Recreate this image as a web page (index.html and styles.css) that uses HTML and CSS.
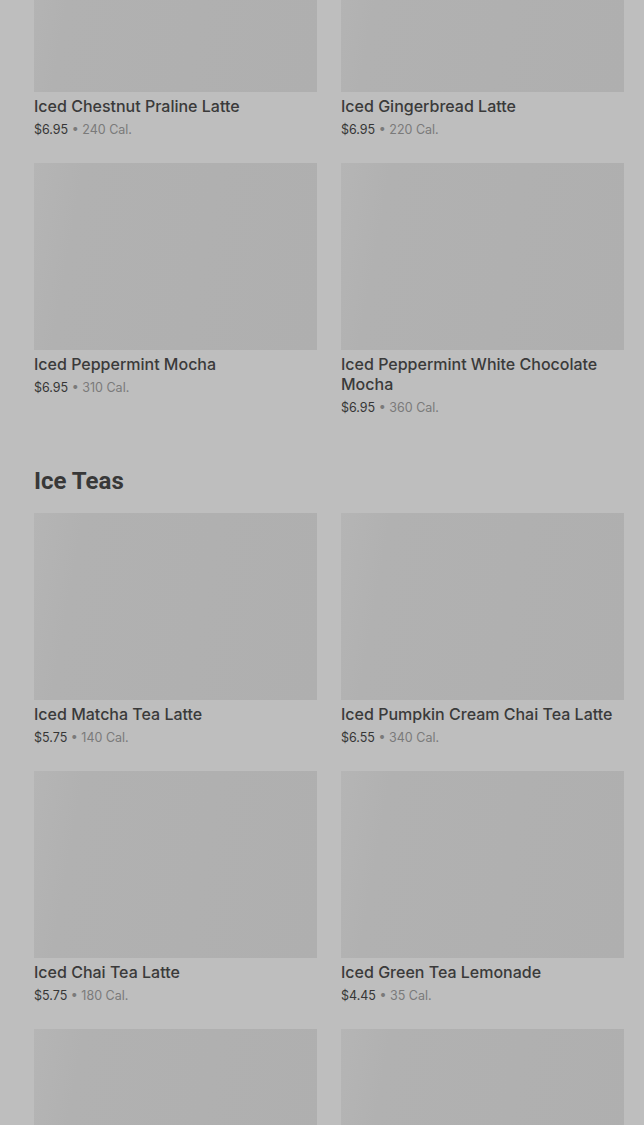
FILE: index.html
```html
<!DOCTYPE html>
<html lang="en">
<head>
  <meta charset="UTF-8">
  <meta name="viewport" content="width=device-width, initial-scale=1.0">
  <title>Menu</title>
  <link rel="stylesheet" href="styles.css">
</head>
<body>
  <main class="menu">
    <section class="category">
      <div class="items">
        <div class="item">
          <div class="thumb"></div>
          <h3>Iced Chestnut Praline Latte</h3>
          <p class="meta">$6.95 <span class="cal">• 240 Cal.</span></p>
        </div>
        <div class="item">
          <div class="thumb"></div>
          <h3>Iced Gingerbread Latte</h3>
          <p class="meta">$6.95 <span class="cal">• 220 Cal.</span></p>
        </div>
        <div class="item">
          <div class="thumb"></div>
          <h3>Iced Peppermint Mocha</h3>
          <p class="meta">$6.95 <span class="cal">• 310 Cal.</span></p>
        </div>
        <div class="item">
          <div class="thumb"></div>
          <h3>Iced Peppermint White Chocolate Mocha</h3>
          <p class="meta">$6.95 <span class="cal">• 360 Cal.</span></p>
        </div>
      </div>
    </section>

    <section class="category">
      <h2>Ice Teas</h2>
      <div class="items">
        <div class="item">
          <div class="thumb"></div>
          <h3>Iced Matcha Tea Latte</h3>
          <p class="meta">$5.75 <span class="cal">• 140 Cal.</span></p>
        </div>
        <div class="item">
          <div class="thumb"></div>
          <h3>Iced Pumpkin Cream Chai Tea Latte</h3>
          <p class="meta">$6.55 <span class="cal">• 340 Cal.</span></p>
        </div>
        <div class="item">
          <div class="thumb"></div>
          <h3>Iced Chai Tea Latte</h3>
          <p class="meta">$5.75 <span class="cal">• 180 Cal.</span></p>
        </div>
        <div class="item">
          <div class="thumb"></div>
          <h3>Iced Green Tea Lemonade</h3>
          <p class="meta">$4.45 <span class="cal">• 35 Cal.</span></p>
        </div>
        <div class="item">
          <div class="thumb"></div>
          <h3>&nbsp;</h3>
        </div>
        <div class="item">
          <div class="thumb"></div>
          <h3>&nbsp;</h3>
        </div>
      </div>
    </section>
  </main>
</body>
</html>
```

FILE: styles.css
```css
html, body {
  margin: 0;
  background: #bebebe;
  overflow: hidden;
}
body {
  font-family: Inter, Roboto, "Liberation Sans", sans-serif;
  color: #3a3a3a;
}
.menu {
  margin-top: -95px;
  padding: 0 20px 0 34px;
}
.category {
  margin-bottom: 48px;
}
.category h2 {
  margin: 0 0 16px;
  font-family: Roboto, "Liberation Sans", sans-serif;
  font-size: 24px;
  line-height: 32px;
  font-weight: 700;
  color: #383838;
}
.items {
  display: grid;
  grid-template-columns: 1fr 1fr;
  column-gap: 24px;
  row-gap: 24px;
}
.thumb {
  height: 187px;
  background: linear-gradient(100deg, #b5b5b5 0%, #b1b1b1 16%, #afafaf 100%);
}
.item h3 {
  margin: 4px 0 0;
  font-size: 16px;
  line-height: 20px;
  font-weight: 500;
  color: #3a3a3a;
}
.meta {
  margin: 5px 0 0;
  font-size: 12.5px;
  line-height: 18px;
  color: #363636;
}
.cal {
  color: #7a7a7a;
}
```
